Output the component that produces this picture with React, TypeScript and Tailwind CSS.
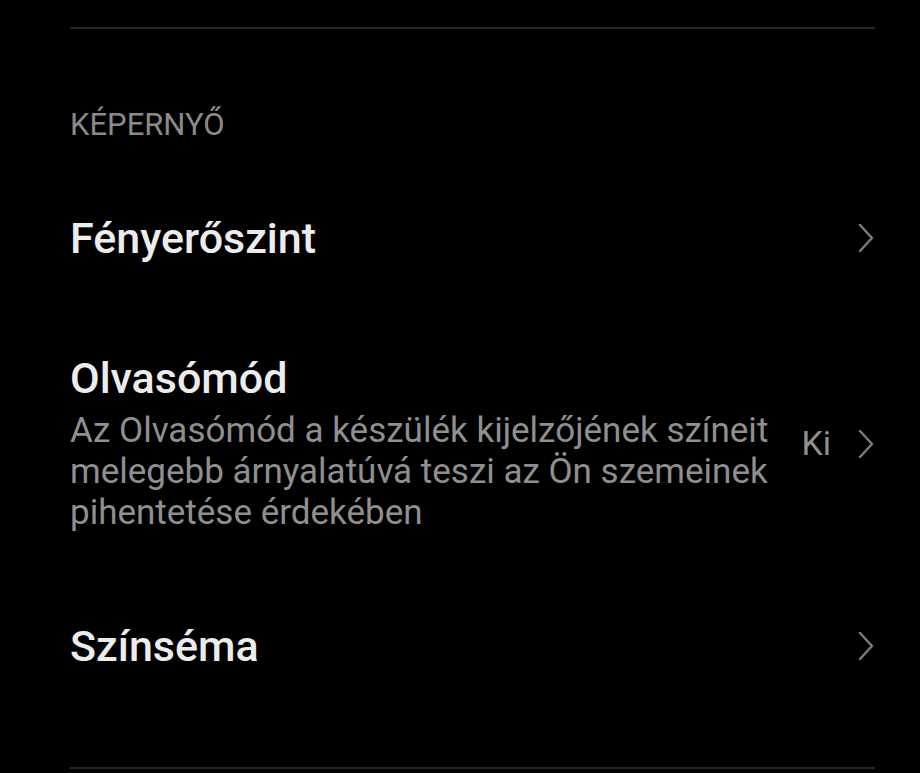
function Chevron() {
  return (
    <svg width="18" height="30" viewBox="0 0 18 30" className="shrink-0">
      <path d="M3 2 L15 15 L3 28" fill="none" stroke="#7c7c7c" strokeWidth="2.4" strokeLinecap="round" strokeLinejoin="round" />
    </svg>
  );
}

interface RowProps {
  title: string;
  description?: string;
  value?: string;
}

function SettingRow({ title, description, value }: RowProps) {
  return (
    <div className="flex items-center justify-between">
      <div className="w-[715px]">
        <div className="text-[43px] leading-[48px] font-medium text-[#ececec]">{title}</div>
        {description && (
          <div className="text-[35px] leading-[41px] text-[#8f8f8f] mt-[8px]">{description}</div>
        )}
      </div>
      <div className="flex items-center gap-[26px]">
        {value && <span className="text-[34px] text-[#8f8f8f]">{value}</span>}
        <Chevron />
      </div>
    </div>
  );
}

export default function App() {
  return (
    <div className="w-[920px] h-[773px] bg-black overflow-hidden" style={{ fontFamily: 'Roboto, "Noto Sans", sans-serif' }}>
      <div className="ml-[70px] mr-[45px]">
        <div className="h-[2px] bg-[#262626] mt-[27px]" />
        <div className="mt-[78px] text-[31px] leading-[36px] text-[#8a8a8a]">KÉPERNYŐ</div>
        <div className="mt-[71px]">
          <SettingRow title="Fényerőszint" />
        </div>
        <div className="mt-[92px]">
          <SettingRow
            title="Olvasómód"
            description="Az Olvasómód a készülék kijelzőjének színeit melegebb árnyalatúvá teszi az Ön szemeinek pihentetése érdekében"
            value="Ki"
          />
        </div>
        <div className="mt-[89px]">
          <SettingRow title="Színséma" />
        </div>
        <div className="h-[2px] bg-[#262626] mt-[97px]" />
      </div>
    </div>
  );
}
